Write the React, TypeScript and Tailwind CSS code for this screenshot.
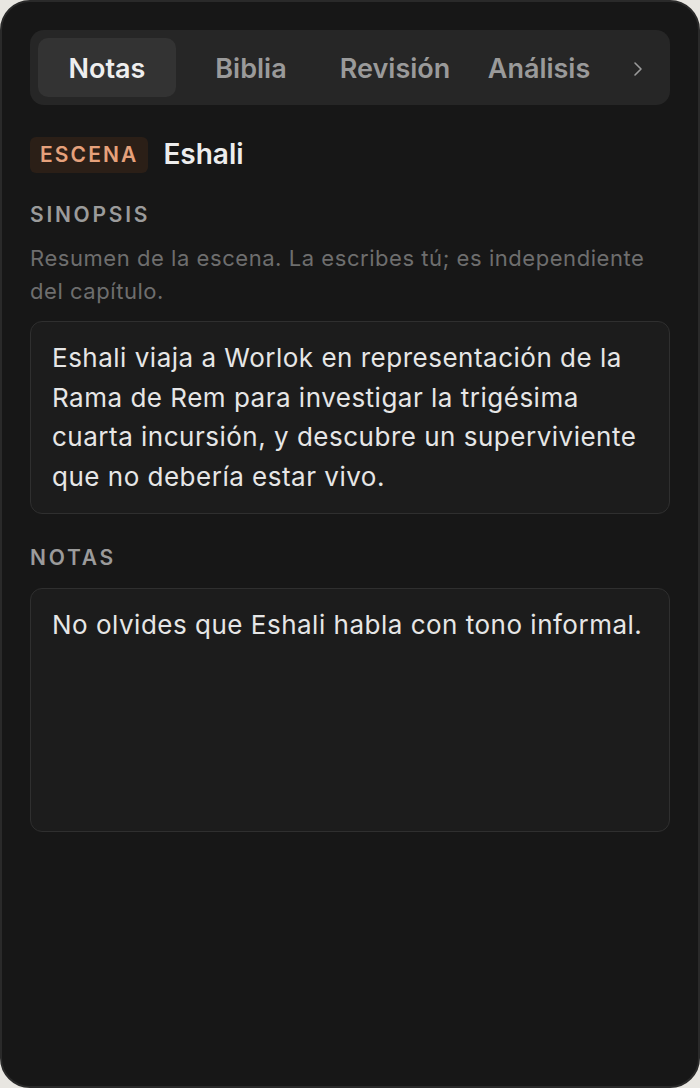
import React from 'react';
import { ChevronRight } from 'lucide-react';

const tabs = ['Notas', 'Biblia', 'Revisión', 'Análisis'];

const SectionLabel: React.FC<{ children: React.ReactNode; className?: string }> = ({ children, className }) => (
  <div className={`text-[21px] leading-[28px] font-semibold tracking-[0.13em] text-[#9b9b9b] ${className ?? ''}`}>
    {children}
  </div>
);

export default function App() {
  return (
    <div className="w-[700px] h-[1088px] bg-[#e8e6e1]" style={{ fontFamily: 'Inter, "Noto Sans", sans-serif' }}>
      <div className="h-full rounded-[30px] border-2 border-[#2a2a2a] bg-[#171717] p-7">
        {/* Tabs */}
        <div className="flex items-center gap-[6px] rounded-[14px] bg-[#262626] p-2">
          {tabs.map((tab, i) => (
            <button
              key={tab}
              className={`w-[138px] h-[59px] pt-[3px] rounded-[10px] text-[27px] font-semibold ${
                i === 0 ? 'bg-[#333333] text-[#eeeeee]' : 'text-[#9a9a9a]'
              }`}
            >
              {tab}
            </button>
          ))}
          <button className="flex-1 h-[59px] pt-[2px] flex items-center justify-center text-[#9a9a9a]">
            <ChevronRight size={24} strokeWidth={1.6} />
          </button>
        </div>

        {/* Scene header */}
        <div className="mt-8 h-[36px] flex items-center gap-[15px]">
          <span className="h-[36px] flex items-center rounded-[6px] bg-[#2b1f17] px-[10px] text-[21px] font-semibold tracking-[0.1em] text-[#e6a17b]">
            ESCENA
          </span>
          <span className="text-[28px] leading-none font-semibold text-[#ededed] -mt-[2px]">Eshali</span>
        </div>

        {/* Sinopsis */}
        <SectionLabel className="mt-[28px]">SINOPSIS</SectionLabel>
        <p className="mt-[13px] text-[22px] leading-[33px] tracking-[0.55px] text-[#6e6e6e]">
          Resumen de la escena. La escribes tú; es independiente del capítulo.
        </p>
        <textarea
          readOnly
          className="mt-[13px] block w-full h-[193px] resize-none overflow-hidden rounded-[12px] border border-[#2f2f2f] bg-[#1c1c1c] px-[21px] pt-4 text-[26px] leading-[39.5px] tracking-[0.5px] text-[#e6e6e6] outline-none"
          defaultValue="Eshali viaja a Worlok en representación de la Rama de Rem para investigar la trigésima cuarta incursión, y descubre un superviviente que no debería estar vivo."
        />

        {/* Notas */}
        <SectionLabel className="mt-[30px]">NOTAS</SectionLabel>
        <textarea
          readOnly
          className="mt-4 block w-full h-[244px] resize-none overflow-hidden rounded-[12px] border border-[#2f2f2f] bg-[#1c1c1c] px-[21px] pt-4 text-[26px] leading-[39.5px] tracking-[0.5px] text-[#e6e6e6] outline-none"
          defaultValue="No olvides que Eshali habla con tono informal."
        />
      </div>
    </div>
  );
}
